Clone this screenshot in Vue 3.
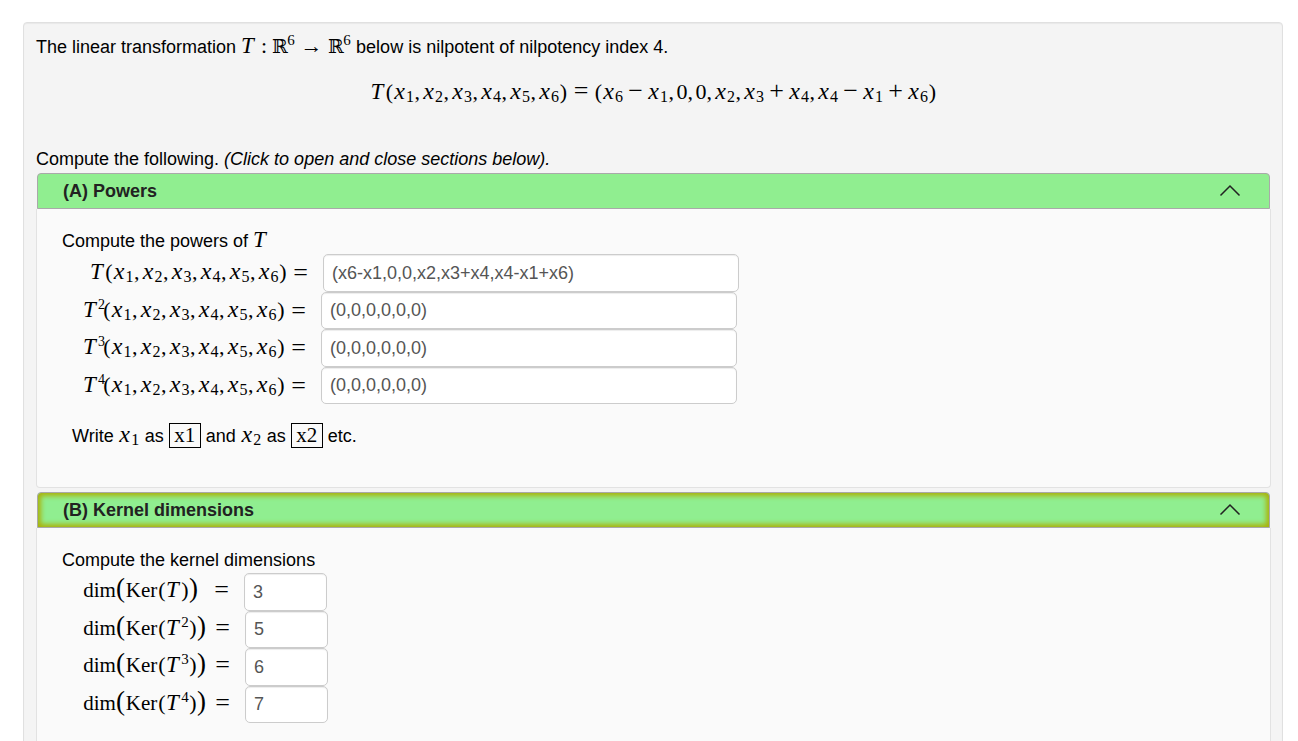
<script setup>
import { h, ref } from 'vue'

const kinds = {
  T: ['var', 'T'],
  '(': ['paren', '('],
  ')': ['paren', ')'],
  '[': ['big', '('],
  ']': ['big', ')'],
  ',': ['comma', ','],
  '=': ['rel', '='],
  ':': ['colon', ':'],
  '>': ['arrow', '→'],
  '+': ['bin', '+'],
  '-': ['bin', '−'],
  R: ['bb', 'ℝ'],
  0: ['num', '0']
}

// Renders a compact formula string: x1 is a subscripted variable, ^2 a power.
const Formula = (props) => {
  const parts = props.src.match(/dim|Ker|x\d|\^\d|\S/g)
  return h('span', { class: 'formula' }, parts.map((p) => {
    if (p === 'dim' || p === 'Ker') return h('span', { class: 'f-op' }, p)
    if (p.length === 2 && p[0] === 'x') {
      return h('span', { class: 'f-x' }, [h('i', 'x'), h('sub', p[1])])
    }
    if (p[0] === '^') return h('sup', p[1])
    const [kind, text] = kinds[p]
    return h('span', { class: 'f-' + kind }, text)
  }))
}
Formula.props = ['src']

const args = '(x1,x2,x3,x4,x5,x6)'
const powers = ref([
  { src: 'T' + args, value: '(x6-x1,0,0,x2,x3+x4,x4-x1+x6)' },
  { src: 'T^2' + args, value: '(0,0,0,0,0,0)' },
  { src: 'T^3' + args, value: '(0,0,0,0,0,0)' },
  { src: 'T^4' + args, value: '(0,0,0,0,0,0)' }
])
const kernels = ref([
  { src: 'dim[Ker(T)]', value: '3' },
  { src: 'dim[Ker(T^2)]', value: '5' },
  { src: 'dim[Ker(T^3)]', value: '6' },
  { src: 'dim[Ker(T^4)]', value: '7' }
])
const openA = ref(true)
const openB = ref(true)
</script>

<template>
  <main class="question">
    <p class="line">The linear transformation <Formula src="T:R^6>R^6" /> below is nilpotent of nilpotency index 4.</p>
    <div class="display"><Formula :src="'T' + args + '=(x6-x1,0,0,x2,x3+x4,x4-x1+x6)'" /></div>
    <p class="line">Compute the following. <em>(Click to open and close sections below).</em></p>

    <section class="panel">
      <button class="head" type="button" :aria-expanded="openA" @click="openA = !openA">
        <span>(A) Powers</span>
        <svg width="22" height="14" viewBox="0 0 22 14"><path d="M1.5 11.500 11 2l9.500 9.500" /></svg>
      </button>
      <div v-show="openA" class="body">
        <p class="line">Compute the powers of <Formula src="T" /></p>
        <div class="rows powers">
          <div v-for="(p, i) in powers" :key="i" class="row">
            <label :for="'p' + i"><Formula :src="p.src" /><Formula src="=" /></label>
            <input :id="'p' + i" v-model="p.value" type="text">
          </div>
        </div>
        <p class="line hint">Write <Formula src="x1" /> as <span class="boxed">x1</span> and <Formula src="x2" /> as <span class="boxed">x2</span> etc.</p>
      </div>
    </section>

    <section class="panel">
      <button class="head focused" type="button" :aria-expanded="openB" @click="openB = !openB">
        <span>(B) Kernel dimensions</span>
        <svg width="22" height="14" viewBox="0 0 22 14"><path d="M1.5 11.500 11 2l9.500 9.500" /></svg>
      </button>
      <div v-show="openB" class="body last">
        <p class="line">Compute the kernel dimensions</p>
        <div class="rows kernels">
          <div v-for="(k, i) in kernels" :key="i" class="row">
            <label :for="'k' + i"><Formula :src="k.src" /><Formula src="=" /></label>
            <input :id="'k' + i" v-model="k.value" type="text">
          </div>
        </div>
      </div>
    </section>
  </main>
</template>

<style>
html { overflow: hidden; background: #fff; }
</style>

<style scoped>
.question {
  margin: 22px 15px 0 23px;
  padding: 12px 11px 12px 12px;
  border: 1px solid #e0e0e0;
  border-radius: 4px;
  background: #f4f4f4;
  box-shadow: inset 0 1px 1px rgba(0, 0, 0, 0.05);
  font: 18px/24px "Liberation Sans", Arial, sans-serif;
  color: #000;
}
.line { margin: 0; line-height: 24px; white-space: nowrap; }
.display { display: flex; justify-content: center; margin: 20px 0 44px; height: 24px; }
.panel { margin-bottom: 4px; }
.head {
  display: flex;
  align-items: center;
  justify-content: space-between;
  width: calc(100% - 2px);
  height: 36px;
  margin: 2px 1px 0;
  padding: 0 28px 0 25px;
  border: 1px solid #a9a9a9;
  border-radius: 4px 4px 0 0;
  background: #90ee90;
  color: #222;
  font: bold 18px/24px "Liberation Sans", Arial, sans-serif;
}
.head.focused { box-shadow: inset 0 0 5px 3px #a9b30c; }
.head svg { fill: none; stroke: #222; stroke-width: 1.5; }
.body {
  padding: 20px 25px 39px;
  border: 1px solid #e2e2e2;
  border-top: 0;
  border-radius: 0 0 4px 4px;
  background: #fafafa;
}
.body.last { padding-bottom: 60px; }
.rows { display: grid; justify-items: start; margin-top: 1px; }
.row { display: flex; height: 38px; }
.row:nth-child(even) { height: 37px; }
.row label { display: flex; align-items: center; height: 34px; margin-right: 9px; }
.row input {
  box-sizing: border-box;
  height: 100%;
  padding: 0 8px;
  border: 1px solid #ccc;
  border-radius: 5px;
  background: #fff;
  box-shadow: inset 0 1px 1px rgba(0, 0, 0, 0.075);
  color: #555;
  font: 18px/24px "Liberation Sans", Arial, sans-serif;
}
.powers .row { padding-left: 21px; }
.powers .row:first-child { padding-left: 28px; }
.powers input { width: 416px; }
.powers :deep(sup) { width: 5px; font-size: 14px; text-align: right; }
.kernels .row { padding-left: 21px; }
.kernels input { width: 83px; }
.kernels label { gap: 3px; height: 30px; }
.kernels .row:first-child label { gap: 10px; }
.kernels label :deep(.f-rel) { line-height: 24px; }
.hint { margin: 19px 0 0 10px; }
.boxed {
  display: inline-block;
  box-sizing: border-box;
  width: 32px;
  height: 25px;
  border: 1px solid #000;
  text-align: center;
  font: 21px/23px "Liberation Serif", serif;
}

:deep(.formula) {
  display: inline-flex;
  align-items: baseline;
  height: 20px;
  font: 22px/20px "Liberation Serif", "DejaVu Serif", serif;
  white-space: nowrap;
}
:deep(.formula > *) { flex: none; text-align: center; }
:deep(.formula > .f-var) { width: 15px; font-style: italic; font-size: 23px; text-align: left; }
:deep(.f-paren) { width: 8px; }
:deep(.f-big) { width: 9px; font-size: 27px; }
:deep(.f-op) { min-width: 33px; font-size: 21px; }
:deep(.formula > .f-comma) { width: 8px; text-align: left; }
:deep(.f-rel) { width: 27px; font-size: 26px; line-height: 24px; }
:deep(.f-bin) { width: 24px; font-size: 26px; }
:deep(.f-colon) { width: 16px; }
:deep(.f-arrow) { width: 33px; }
:deep(.f-bb) { width: 15px; font-size: 19px; }
:deep(.f-num) { width: 11px; }
:deep(.f-x) { display: inline-flex; align-items: baseline; width: 21px; }
:deep(.f-x i) { width: 12px; font-size: 24px; text-align: center; }
:deep(sub) { width: 9px; position: relative; top: 3px; font-size: 16px; line-height: 16px; vertical-align: baseline; }
:deep(sup) { width: 8px; position: relative; top: -8px; font-size: 15px; line-height: 16px; vertical-align: baseline; }
</style>
